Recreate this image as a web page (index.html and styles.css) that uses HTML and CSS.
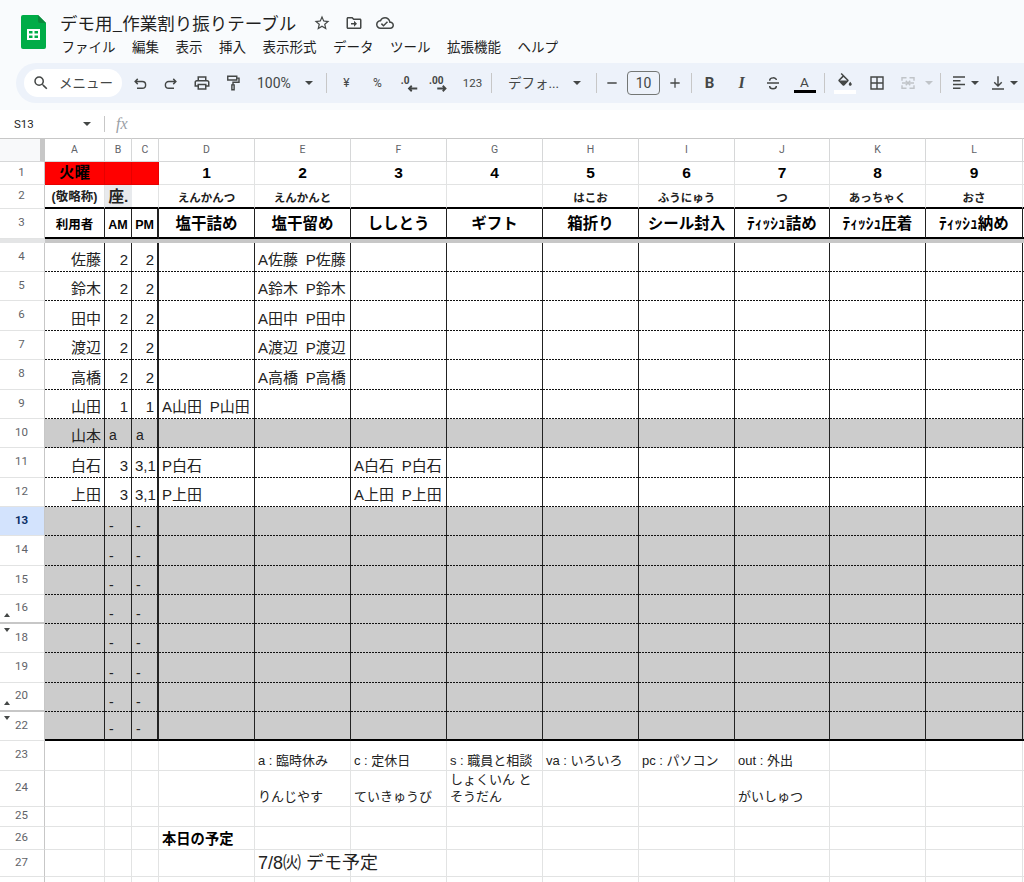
FILE: index.html
```html
<!DOCTYPE html>
<html lang="ja">
<head>
<meta charset="utf-8">
<title>デモ用_作業割り振りテーブル</title>
<link rel="stylesheet" href="styles.css">
</head>
<body>
<header class="top">
  <div class="head">
    <svg class="logo" viewBox="0 0 25 34"><path fill="#00ac47" d="M2 0h15l8 8v24a2 2 0 0 1-2 2H2a2 2 0 0 1-2-2V2a2 2 0 0 1 2-2z"/><path fill="#0a8a3c" d="M17 0l8 8h-6a2 2 0 0 1-2-2z"/><path fill="#fff" d="M6 14h13v11H6zm2 2v2.5h3.5V16zm5.500 0v2.500H17V16zM8 20.500V23h3.500v-2.500zm5.500 0V23H17v-2.500z"/></svg>
    <div class="titles">
      <div class="title-row">
        <span class="title">デモ用_作業割り振りテーブル</span>
        <svg class="ic ic-star" viewBox="0 0 24 24"><path d="M22 9.240l-7.190-.62L12 2 9.190 8.630 2 9.240l5.460 4.730L5.820 21 12 17.270 18.180 21l-1.630-7.030L22 9.240zM12 15.400l-3.760 2.270 1-4.280-3.320-2.880 4.380-.38L12 6.100l1.710 4.040 4.380.38-3.320 2.880 1 4.280L12 15.400z"/></svg>
        <svg class="ic ic-star" viewBox="0 0 24 24"><path d="M20 6h-8l-2-2H4c-1.100 0-2 .9-2 2v12c0 1.100.9 2 2 2h16c1.100 0 2-.9 2-2V8c0-1.100-.9-2-2-2zm0 12H4V6h5.170l2 2H20v10zm-8-4H8v-2h4V9l4 4-4 4v-3z"/></svg>
        <svg class="ic ic-star" viewBox="0 0 24 24"><path d="M19.350 10.040C18.670 6.590 15.640 4 12 4 9.110 4 6.600 5.640 5.350 8.040 2.340 8.360 0 10.910 0 14c0 3.310 2.690 6 6 6h13c2.760 0 5-2.240 5-5 0-2.640-2.050-4.780-4.650-4.960zM19 18H6c-2.210 0-4-1.790-4-4 0-2.050 1.530-3.760 3.560-3.970l1.070-.11.5-.95C8.080 7.140 9.940 6 12 6c2.620 0 4.880 1.860 5.390 4.430l.3 1.500 1.530.11c1.560.1 2.780 1.410 2.780 2.960 0 1.650-1.350 3-3 3zm-9-3.820l-2.090-2.090L6.500 13.500 10 17l6.010-6.010-1.410-1.410z"/></svg>
      </div>
      <nav class="menu"><span>ファイル</span><span>編集</span><span>表示</span><span>挿入</span><span>表示形式</span><span>データ</span><span>ツール</span><span>拡張機能</span><span>ヘルプ</span></nav>
    </div>
  </div>
  <div class="toolbar">
    <div class="search">
      <svg class="ic" viewBox="0 0 24 24"><path d="M15.500 14h-.79l-.28-.27A6.471 6.471 0 0 0 16 9.500 6.500 6.500 0 1 0 9.500 16c1.610 0 3.090-.59 4.230-1.570l.27.28v.79l5 4.990L20.490 19l-4.990-5zm-6 0C7.010 14 5 11.990 5 9.500S7.010 5 9.500 5 14 7.010 14 9.500 11.990 14 9.500 14z"/></svg>
      <span>メニュー</span>
    </div>
    <span class="btn"><svg class="st" viewBox="0 0 24 24"><path d="M9 6.500L5.500 10 9 13.500M5.500 10H15a4.500 4.500 0 0 1 0 9H8"/></svg></span>
    <span class="btn"><svg class="st" viewBox="0 0 24 24"><path d="M15 6.500l3.500 3.500-3.500 3.500M18.500 10H9a4.500 4.500 0 0 0 0 9h7"/></svg></span>
    <span class="btn"><svg class="ic" viewBox="0 0 24 24"><path d="M19 8h-1V3H6v5H5c-1.660 0-3 1.340-3 3v6h4v4h12v-4h4v-6c0-1.660-1.340-3-3-3zM8 5h8v3H8V5zm8 14H8v-4h8v4zm2-4v-2H6v2H4v-4c0-.55.45-1 1-1h14c.55 0 1 .45 1 1v4h-2z"/></svg></span>
    <span class="btn"><svg class="st" viewBox="0 0 24 24"><path d="M5 3h12v5H5zM17 5.500h3V11h-8v3.500M10.500 14.500h3V21h-3z"/></svg></span>
    <span class="zoom">100%</span><span class="caret caret-zoom"></span>
    <span class="sep sep-a"></span>
    <span class="btn txt">¥</span>
    <span class="btn txt">%</span>
    <span class="btn"><svg class="dec" viewBox="0 0 24 24"><text x="3" y="13" class="dec-t">.0</text><path class="dec-a" d="M21 18h-9M15 15l-3 3 3 3"/></svg></span>
    <span class="btn"><svg class="dec" viewBox="0 0 24 24"><text x="0" y="13" class="dec-t">.00</text><path class="dec-a" d="M9 18h9M15 15l3 3-3 3"/></svg></span>
    <span class="btn txt num">123</span>
    <span class="sep sep-b"></span>
    <span class="font">デフォ...</span><span class="caret caret-font"></span>
    <span class="sep sep-c"></span>
    <span class="btn-s"><svg class="st" viewBox="0 0 24 24"><path d="M5 12h14"/></svg></span>
    <span class="size">10</span>
    <span class="btn-s"><svg class="st" viewBox="0 0 24 24"><path d="M5 12h14M12 5v14"/></svg></span>
    <span class="sep sep-d"></span>
    <span class="btn b">B</span>
    <span class="btn i">I</span>
    <span class="btn"><svg class="st" viewBox="0 0 24 24"><path d="M4 12h16M7.500 9c0-5 9-5 9-1M7.500 16c0 5 9 5 9 0"/></svg></span>
    <span class="btn colour colour-a"><span class="a">A</span><span class="bar bar-k"></span></span>
    <span class="sep sep-e"></span>
    <span class="btn colour colour-f"><svg class="ic ic-fill" viewBox="0 0 24 20"><path d="M16.560 8.940L7.620 0 6.210 1.410l2.380 2.380-5.150 5.150c-.59.59-.59 1.540 0 2.120l5.500 5.500c.29.29.68.44 1.060.44s.77-.15 1.060-.44l5.500-5.500c.59-.58.59-1.530 0-2.120zM5.210 10L10 5.210 14.790 10H5.210zM19 11.500s-2 2.170-2 3.500c0 1.100.9 2 2 2s2-.9 2-2c0-1.330-2-3.500-2-3.500z"/></svg><span class="bar bar-w"></span></span>
    <span class="btn"><svg class="st" viewBox="0 0 24 24"><path d="M4 4h16v16H4zM12 4v16M4 12h16"/></svg></span>
    <span class="btn"><svg class="st off" viewBox="0 0 24 24"><path d="M10 5H4v4M10 19H4v-4M14 5h6v4M14 19h6v-4M4 12h6M20 12h-6M9 9l3 3-3 3M15 9l-3 3 3 3"/></svg></span>
    <span class="caret caret-off"></span>
    <span class="sep sep-f"></span>
    <span class="btn"><svg class="st" viewBox="0 0 24 24"><path d="M4 4h16M4 9h10M4 14h16M4 19h10"/></svg></span><span class="caret caret-n"></span>
    <span class="btn btn-v"><svg class="st" viewBox="0 0 24 24"><path d="M12 3v13M7 11l5 5 5-5M4 20h16"/></svg></span><span class="caret caret-n"></span>
  </div>
</header>
<div class="formula">
  <span class="name">S13</span><span class="caret caret-name"></span>
  <span class="fsep"></span>
  <span class="fx">fx</span>
</div>
<div class="sheet">
<table>
<colgroup><col class="c-rh"><col class="c-a"><col class="c-b"><col class="c-c"><col class="c-d"><col class="c-e"><col class="c-e"><col class="c-e"><col class="c-e"><col class="c-e"><col class="c-j"><col class="c-k"><col class="c-l"><col class="c-m"></colgroup>
<thead>
<tr class="cols h24"><th class="corner"></th><th>A</th><th>B</th><th>C</th><th>D</th><th>E</th><th>F</th><th>G</th><th>H</th><th>I</th><th>J</th><th>K</th><th>L</th><th></th></tr>
</thead>
<tbody>
<tr class="top1 h23"><th>1</th><td class="red">火曜</td><td class="red"></td><td class="red"></td><td>1</td><td>2</td><td>3</td><td>4</td><td>5</td><td>6</td><td>7</td><td>8</td><td>9</td><td></td></tr>
<tr class="top2 h24"><th>2</th><td class="honor">(敬略称)</td><td class="seat">座.</td><td></td><td>えんかんつ</td><td>えんかんと</td><td></td><td></td><td>はこお</td><td>ふうにゅう</td><td>つ</td><td>あっちゃく</td><td>おさ</td><td></td></tr>
<tr class="top3 h30"><th>3</th><td class="small">利用者</td><td class="small">AM</td><td class="small">PM</td><td>塩干詰め</td><td>塩干留め</td><td>ししとう</td><td>ギフト</td><td>箱折り</td><td>シール封入</td><td>ﾃｨｯｼｭ詰め</td><td>ﾃｨｯｼｭ圧着</td><td>ﾃｨｯｼｭ納め</td><td></td></tr>
<tr class="freeze"><th></th><td colspan="13"></td></tr>
<tr class="d h29"><th>4</th><td>佐藤</td><td>2</td><td>2</td><td></td><td>A佐藤 P佐藤</td><td></td><td></td><td></td><td></td><td></td><td></td><td></td><td></td></tr>
<tr class="d h29"><th>5</th><td>鈴木</td><td>2</td><td>2</td><td></td><td>A鈴木 P鈴木</td><td></td><td></td><td></td><td></td><td></td><td></td><td></td><td></td></tr>
<tr class="d h30"><th>6</th><td>田中</td><td>2</td><td>2</td><td></td><td>A田中 P田中</td><td></td><td></td><td></td><td></td><td></td><td></td><td></td><td></td></tr>
<tr class="d h29"><th>7</th><td>渡辺</td><td>2</td><td>2</td><td></td><td>A渡辺 P渡辺</td><td></td><td></td><td></td><td></td><td></td><td></td><td></td><td></td></tr>
<tr class="d h30"><th>8</th><td>高橋</td><td>2</td><td>2</td><td></td><td>A高橋 P高橋</td><td></td><td></td><td></td><td></td><td></td><td></td><td></td><td></td></tr>
<tr class="d h29"><th>9</th><td>山田</td><td>1</td><td>1</td><td>A山田 P山田</td><td></td><td></td><td></td><td></td><td></td><td></td><td></td><td></td><td></td></tr>
<tr class="d g h29"><th>10</th><td>山本</td><td class="l">a</td><td class="l">a</td><td></td><td></td><td></td><td></td><td></td><td></td><td></td><td></td><td></td><td></td></tr>
<tr class="d h30"><th>11</th><td>白石</td><td>3</td><td>3,1</td><td>P白石</td><td></td><td>A白石 P白石</td><td></td><td></td><td></td><td></td><td></td><td></td><td></td></tr>
<tr class="d h29"><th>12</th><td>上田</td><td>3</td><td>3,1</td><td>P上田</td><td></td><td>A上田 P上田</td><td></td><td></td><td></td><td></td><td></td><td></td><td></td></tr>
<tr class="d g dash h29"><th class="sel">13</th><td></td><td class="l">-</td><td class="l">-</td><td></td><td></td><td></td><td></td><td></td><td></td><td></td><td></td><td></td><td></td></tr>
<tr class="d g dash h30"><th>14</th><td></td><td class="l">-</td><td class="l">-</td><td></td><td></td><td></td><td></td><td></td><td></td><td></td><td></td><td></td><td></td></tr>
<tr class="d g dash h29"><th>15</th><td></td><td class="l">-</td><td class="l">-</td><td></td><td></td><td></td><td></td><td></td><td></td><td></td><td></td><td></td><td></td></tr>
<tr class="d g dash h29"><th class="hidden-next">16<span class="tri up"></span></th><td></td><td class="l">-</td><td class="l">-</td><td></td><td></td><td></td><td></td><td></td><td></td><td></td><td></td><td></td><td></td></tr>
<tr class="d g dash h29"><th>18<span class="tri down"></span></th><td></td><td class="l">-</td><td class="l">-</td><td></td><td></td><td></td><td></td><td></td><td></td><td></td><td></td><td></td><td></td></tr>
<tr class="d g dash h30"><th>19</th><td></td><td class="l">-</td><td class="l">-</td><td></td><td></td><td></td><td></td><td></td><td></td><td></td><td></td><td></td><td></td></tr>
<tr class="d g dash h29"><th class="hidden-next">20<span class="tri up"></span></th><td></td><td class="l">-</td><td class="l">-</td><td></td><td></td><td></td><td></td><td></td><td></td><td></td><td></td><td></td><td></td></tr>
<tr class="d g dash end h29"><th>22<span class="tri down"></span></th><td></td><td class="l">-</td><td class="l">-</td><td></td><td></td><td></td><td></td><td></td><td></td><td></td><td></td><td></td><td></td></tr>
<tr class="n h30"><th>23</th><td></td><td></td><td></td><td></td><td>a : 臨時休み</td><td>c : 定休日</td><td>s : 職員と相談</td><td>va : いろいろ</td><td>pc : パソコン</td><td>out : 外出</td><td></td><td></td><td></td></tr>
<tr class="n h36"><th>24</th><td></td><td></td><td></td><td></td><td>りんじやす</td><td>ていきゅうび</td><td class="wrap">しょくいん と そうだん</td><td></td><td></td><td>がいしゅつ</td><td></td><td></td><td></td></tr>
<tr class="n h20"><th>25</th><td></td><td></td><td></td><td></td><td></td><td></td><td></td><td></td><td></td><td></td><td></td><td></td><td></td></tr>
<tr class="n h23"><th>26</th><td></td><td></td><td></td><td class="plan">本日の予定</td><td></td><td></td><td></td><td></td><td></td><td></td><td></td><td></td><td></td></tr>
<tr class="n h27"><th>27</th><td></td><td></td><td></td><td></td><td class="today">7/8㈫ デモ予定</td><td></td><td></td><td></td><td></td><td></td><td></td><td></td><td></td></tr>
<tr class="n h23"><th>28</th><td></td><td></td><td></td><td></td><td></td><td></td><td></td><td></td><td></td><td></td><td></td><td></td><td></td></tr>
</tbody>
</table>
</div>
</body>
</html>
```
FILE: styles.css
```css
* { box-sizing: border-box; }
html, body { margin: 0; height: 882px; overflow: hidden; background: #fff; }
body { font-family: "Liberation Sans", "Noto Sans CJK JP", sans-serif; color: #222; width: 1024px; }

.top { height: 110px; background: #f9fbfd; }
.head { height: 63px; display: flex; padding: 15px 0 0 21px; }
.logo { width: 25px; height: 34px; flex: none; }
.titles { margin: -4px 0 0 14px; }
.title-row { display: flex; align-items: center; height: 24px; }
.title { font: 17.500px/24px "Noto Sans CJK JP", sans-serif; color: #1f1f1f; margin-right: 18px; width: 235px; white-space: nowrap; }
.ic-star { margin-right: 13.500px; }
.ic { width: 18px; height: 18px; fill: #444746; flex: none; }
.st { width: 18px; height: 18px; fill: none; stroke: #444746; stroke-width: 1.900; flex: none; }
.st.off { stroke: #c0c4c8; }
.menu { display: flex; gap: 16.500px; margin: 2px 0 0 1.500px; font: 13.500px/18px "Noto Sans CJK JP", sans-serif; color: #1f1f1f; }

.toolbar { margin-left: 16px; height: 40px; background: #edf2fa; border-radius: 20px 0 0 20px; display: flex; align-items: center; padding-left: 8px; color: #444746; font: 13.500px/18px Roboto, "Noto Sans CJK JP", sans-serif; overflow: hidden; }
.search { width: 98px; height: 28px; background: #fff; border-radius: 14px; display: flex; align-items: center; gap: 9px; padding-left: 8px; flex: none; margin-right: 2px; color: #444746; white-space: nowrap; }
.btn { width: 31px; height: 28px; display: flex; align-items: center; justify-content: center; flex: none; position: relative; }
.btn-s { width: 30px; height: 28px; display: flex; align-items: center; justify-content: center; flex: none; }
.btn-s .st { width: 16px; height: 16px; }
.txt { font-size: 12px; }
.num { font-size: 11.500px; margin-left: 2px; }
.zoom { margin-left: 9px; width: 48px; flex: none; font-size: 14px; }
.caret { width: 0; height: 0; border: 4px solid transparent; border-top: 4px solid #444746; border-bottom: 0; flex: none; }
.caret-zoom { margin-right: 13px; }
.sep { width: 1px; height: 20px; background: #c7c7c7; flex: none; }
.sep-a { margin-right: 4px; }
.sep-b { margin-left: 3px; margin-right: 16px; }
.font { width: 65px; flex: none; white-space: nowrap; }
.caret-font { margin-right: 15px; }
.size { width: 33px; height: 24px; border: 1px solid #747775; border-radius: 4px; text-align: center; line-height: 22px; font-size: 14px; flex: none; }
.sep-d { margin-left: 1px; margin-right: 2px; }
.b { font: bold 15px Roboto, sans-serif; }
.i { font: italic bold 16px "Liberation Serif", serif; margin-left: 1px; }
.colour { flex-direction: column; }
.colour-a { margin-left: 1px; }
.colour-f { margin-right: 1px; }
.a { font-size: 13.500px; line-height: 15px; margin-top: 1px; }
.bar { width: 22px; height: 3px; }
.bar-k { background: #000; }
.bar-w { background: #fff; height: 4px; }
.ic-fill { height: 15px; width: 18px; margin-bottom: 2px; }
.sep-e { margin-left: 4px; margin-right: 4px; }
.caret-off { border-top-color: #c0c4c8; margin-left: 2px; margin-right: 7px; }
.sep-f { margin-right: 2px; }
.caret-n { margin-left: -3px; }
.btn-v { margin-left: 3px; }
.dec { width: 22px; height: 22px; }
.dec-t { font: bold 11px Roboto, sans-serif; fill: #444746; }
.dec-a { fill: none; stroke: #444746; stroke-width: 2; }

.formula { height: 28px; display: flex; align-items: center; background: #fff; font: 11.500px Roboto, sans-serif; color: #1f1f1f; padding-left: 14px; }
.name { width: 69px; }
.caret-name { margin-right: 13px; }
.fsep { width: 1px; height: 16px; background: #c7c7c7; margin-right: 11px; }
.fx { font: italic 16px "Liberation Serif", serif; color: #9aa0a6; }

.sheet { height: 744px; overflow: hidden; }
table { border-collapse: separate; border-spacing: 0; table-layout: fixed; width: 1070px; font-size: 15px; line-height: 17px; }
.c-rh { width: 45px; } .c-a { width: 60px; } .c-b { width: 27px; } .c-c { width: 27px; } .c-d { width: 96px; } .c-e { width: 96px; } .c-j { width: 95px; } .c-k { width: 96px; } .c-l { width: 97px; } .c-m { width: 48px; }
.h20 { height: 20px; } .h23 { height: 23px; } .h24 { height: 24px; } .h27 { height: 27px; } .h29 { height: 29px; } .h30 { height: 30px; } .h36 { height: 36px; }

td, th { padding: 0; overflow: hidden; white-space: nowrap; border-right: 1px solid #e2e3e3; border-bottom: 1px solid #e2e3e3; }
tbody th { background: #fff; border-right: 1px solid #c7c7c7; border-bottom: 1px solid #e2e3e3; font: 11.500px/14px Roboto, sans-serif; color: #5f6368; text-align: center; vertical-align: middle; padding-bottom: 3px; padding-right: 1px; position: relative; overflow: visible; }
tbody th.hidden-next { border-bottom: 2px solid #c7c7c7; }
.cols th { border-top: 1px solid #c7c7c7; border-right: 1px solid #d6d7d8; border-bottom: 1px solid #d6d7d8; font: 10.500px/14px Roboto, sans-serif; color: #5f6368; }
.cols .corner { background: #f8f9fa; border-right: 5px solid #c7c7c7; }

.top1 td { font-weight: bold; font-size: 15.500px; text-align: center; padding-bottom: 3px; color: #000; vertical-align: bottom; }
.top1 td.red { background: #f00; border-right-color: #e60000; border-bottom-color: #e60000; }
.top2 td { font-weight: bold; font-size: 11.500px; text-align: center; vertical-align: bottom; padding-bottom: 0; border-bottom-color: #000; border-bottom-width: 2px; }
.top2 th { border-bottom-color: #e2e3e3; }
.top2 td.honor { font-size: 12.500px; padding-bottom: 1px; }
.top2 td.seat { background: #e8eaed; font-size: 15.500px; border-right: 0; padding-bottom: 2px; }
.top3 td { font-weight: bold; font-size: 15.500px; text-align: center; color: #000; vertical-align: middle; padding-top: 1px; border-right: 1px solid #222; border-bottom: 2px solid #000; }
.top3 td.small { font-size: 12.500px; padding-top: 5px; }
.top3 td:nth-child(4) { border-right-width: 2px; }
.freeze { height: 4px; }
.freeze td { background: #c7c7c7; border: 0; }
.freeze th { background: #e4e5e6; border: 0; padding: 0; font-size: 0; line-height: 0; }

.d td { border-right: 1px solid #222; border-bottom: 0; text-align: right; padding: 0 3px 4px; vertical-align: bottom; background-image: repeating-linear-gradient(90deg, #111 0 2px, transparent 2px 3px); background-size: 100% 1px; background-position: bottom; background-repeat: no-repeat; }
.d td:nth-child(4) { border-right-width: 2px; }
.d td:nth-child(n+5) { text-align: left; font-size: 15px; word-spacing: 3.500px; }
.d td.l { text-align: left; padding-left: 4px; font-size: 14px; }
.g td { background-color: #ccc; }
.dash td.l { padding-bottom: 2px; line-height: 16px; }
.end td { border-bottom: 2px solid #000; background-image: none; }
.sel { background: #d3e3fd !important; color: #0b2f66 !important; font-weight: bold !important; }
.tri { position: absolute; left: 4px; width: 0; height: 0; border: 3.500px solid transparent; }
.tri.up { bottom: 5px; border-top: 0; border-bottom: 4px solid #444746; }
.tri.down { top: 4px; border-bottom: 0; border-top: 4px solid #444746; }

.n td { font-size: 13px; line-height: 17px; padding: 0 3px 1px; vertical-align: bottom; }
.n td.wrap { white-space: normal; line-height: 17px; padding-bottom: 1px; }
.n td.plan { font-weight: bold; font-size: 14.300px; color: #000; padding-bottom: 1px; }
.n td.today { font-size: 18px; line-height: 21px; overflow: visible; padding-bottom: 2px; }
```
